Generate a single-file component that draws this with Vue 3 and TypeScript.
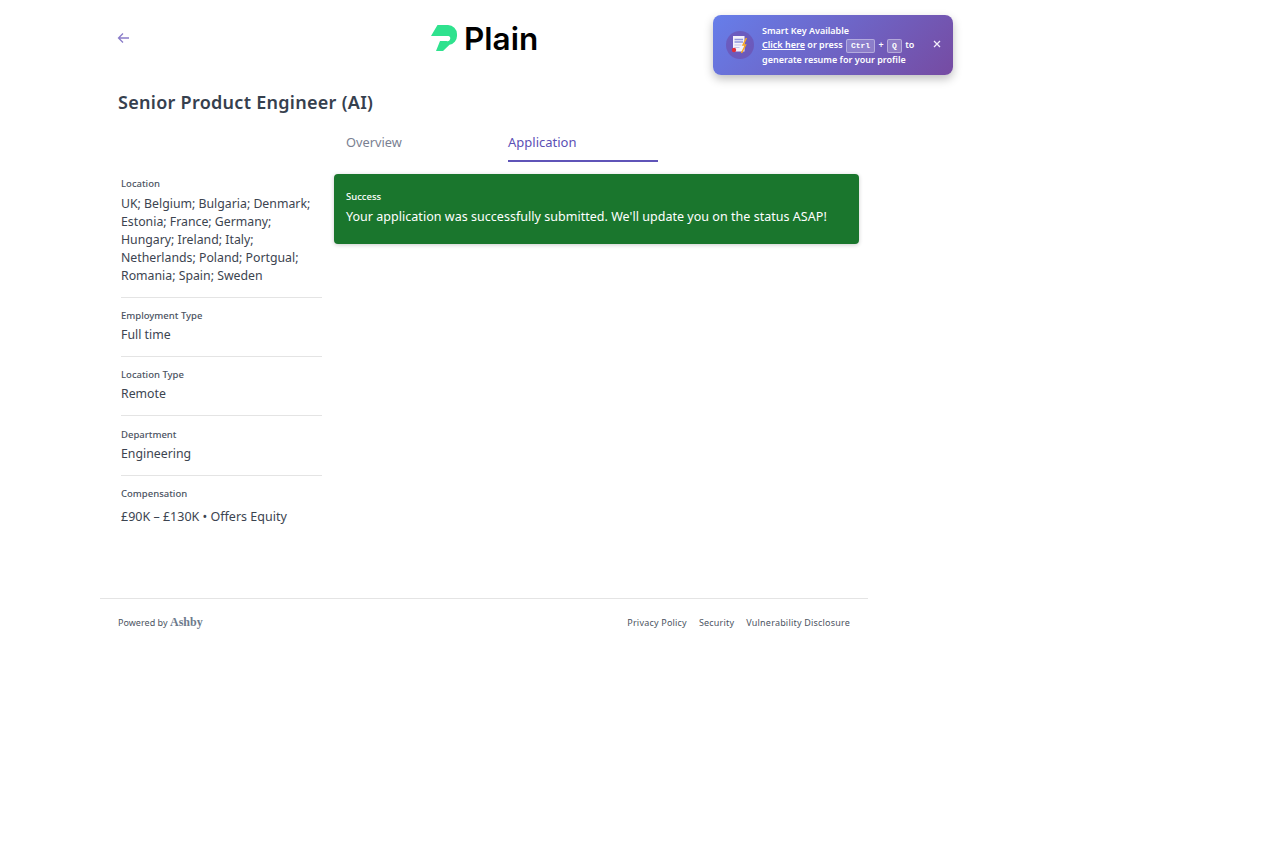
<script setup lang="ts">
const facts = [
  { label: 'Location', value: 'UK; Belgium; Bulgaria; Denmark; Estonia; France; Germany; Hungary; Ireland; Italy; Netherlands; Poland; Portgual; Romania; Spain; Sweden' },
  { label: 'Employment Type', value: 'Full time' },
  { label: 'Location Type', value: 'Remote' },
  { label: 'Department', value: 'Engineering' },
  { label: 'Compensation', value: '£90K – £130K • Offers Equity' },
]
const links = ['Privacy Policy', 'Security', 'Vulnerability Disclosure']
</script>

<template>
  <div class="page">
    <div class="shell">
      <header class="top">
        <svg class="back" width="14" height="12" viewBox="0 0 14 12" fill="none" stroke="#8a7cc9" stroke-width="1.3">
          <path d="M12 6H1.500M6 1.500 1.500 6 6 10.500" />
        </svg>
        <div class="logo">
          <svg width="26" height="26" viewBox="0 0 26 26">
            <path fill="#2fe28e" d="M6.500 0H17a9 9 0 0 1 9 9v2a9 9 0 0 1-7.500 8.800L12 26H5l4-10h6.500a2.500 2.500 0 0 0 2-5H0z" />
          </svg>
          <span class="logo-text">Plain</span>
        </div>
      </header>
      <h1 class="title">Senior Product Engineer (AI)</h1>
      <div class="columns">
        <aside class="side">
          <div v-for="f in facts" :key="f.label" class="fact">
            <div class="fact-label">{{ f.label }}</div>
            <div class="fact-value">{{ f.value }}</div>
          </div>
        </aside>
        <main class="main">
          <nav class="tabs">
            <a class="tab">Overview</a>
            <a class="tab active">Application</a>
          </nav>
          <div class="alert">
            <div class="alert-title">Success</div>
            <div class="alert-body">Your application was successfully submitted. We'll update you on the status ASAP!</div>
          </div>
        </main>
      </div>
      <footer class="foot">
        <div class="powered">Powered by <span class="ashby">Ashby</span></div>
        <div class="links"><a v-for="l in links" :key="l">{{ l }}</a></div>
      </footer>
    </div>
    <div class="toast">
      <div class="toast-icon">
        <svg width="18" height="20" viewBox="0 0 18 20">
          <rect x="2" y="1" width="11.500" height="15.500" fill="#f4f2fb" />
          <path d="M3.500 4.500h8.500M3.500 7h8.500" stroke="#8f97dc" stroke-width="1.300" />
          <path d="M3.500 10h7M3.500 12.500h5" stroke="#c3c5ea" stroke-width="1" />
          <path d="M15.500 3 12 10h2.500L10.500 18" fill="none" stroke="#f5a623" stroke-width="1.500" />
          <circle cx="3" cy="15" r="2.200" fill="#e02f3a" />
        </svg>
      </div>
      <div class="toast-text">
        <div>Smart Key Available</div>
        <div><u>Click here</u> or press <kbd>Ctrl</kbd> + <kbd>Q</kbd> to</div>
        <div>generate resume for your profile</div>
      </div>
      <svg class="close" width="8" height="8" viewBox="0 0 8 8" stroke="#f3eefb" stroke-width="1.300"><path d="M1 1l6 6M7 1 1 7" /></svg>
    </div>
  </div>
</template>

<style>
body { background: #fff; }
</style>

<style scoped>
.page {
  position: relative;
  min-height: 864px;
  font-family: "Noto Sans", sans-serif;
  color: #36404e;
}
.shell { width: 768px; margin-left: 100px; }
.top {
  display: flex;
  align-items: center;
  height: 76px;
  padding-left: 17px;
}
.back { display: block; }
.logo {
  display: flex;
  align-items: center;
  gap: 7px;
  margin-left: 300px;
}
.logo-text {
  font-family: Inter, sans-serif;
  font-weight: 600;
  font-size: 31.500px;
  line-height: 36px;
  padding-top: 1px;
  color: #000;
}
.title {
  margin: 14px 0 0 18px;
  font-size: 18px;
  line-height: 24px;
  font-weight: 600;
  letter-spacing: .28px;
  color: #36404e;
}
.columns { display: flex; margin-top: 16px; padding-left: 21px; }
.side { width: 201px; padding-top: 48px; }
.fact { padding: 0 0 12px; border-bottom: 1px solid #e4e4e4; margin-bottom: 12.500px; }
.fact:first-child { margin-bottom: 11.500px; }
.fact:last-child { border-bottom: 0; margin-bottom: 0; }
.fact-label { font-size: 9.500px; line-height: 12px; color: #4a5261; font-weight: 500; }
.fact-value { font-size: 12.300px; line-height: 18px; margin-top: 4px; color: #3c4450; }
.fact:first-child .fact-value { margin-top: 5px; }
.fact:last-child .fact-value { margin-top: 8px; font-size: 12.500px; }
.main { width: 525px; margin-left: 12px; }
.tabs { display: flex; height: 32px; padding-left: 12px; gap: 12px; }
.tab {
  width: 150px;
  box-sizing: border-box;
  height: 32px;
  font-size: 12.800px;
  line-height: 18px;
  padding-top: 3px;
  color: #7a7f92;
}
.tab.active {
  color: #5b50b5;
  border-bottom: 2px solid #5f54b8;
  font-size: 13px;
}
.alert {
  margin-top: 12px;
  height: 70px;
  box-sizing: border-box;
  padding: 16px 12px;
  border-radius: 4px;
  background: #1a762d;
  color: #fff;
  box-shadow: 0 1px 4px rgba(0, 0, 0, .2);
}
.alert-title { font-size: 9.500px; line-height: 13px; font-weight: 500; }
.alert-body { font-size: 12.500px; line-height: 18px; margin-top: 5px; letter-spacing: .03px; }
.foot {
  margin-top: 60px;
  border-top: 1px solid #e4e4e4;
  height: 47px;
  padding: 0 18px;
  display: flex;
  align-items: center;
  justify-content: space-between;
  color: #4c5462;
  font-size: 9px;
}
.powered { line-height: 12px; letter-spacing: .03px; }
.ashby {
  font-family: "Liberation Serif", serif;
  font-weight: 700;
  font-size: 12px;
  color: #6d7a8c;
}
.links { display: flex; gap: 12px; font-size: 9px; letter-spacing: .2px; }
.toast {
  position: absolute;
  left: 713px;
  top: 15px;
  width: 240px;
  height: 60px;
  box-sizing: border-box;
  padding: 0 12px 0 13px;
  display: flex;
  align-items: center;
  border-radius: 8px;
  color: #fff;
  background: linear-gradient(135deg, #667eea, #764ba2);
  box-shadow: 0 4px 10px rgba(0, 0, 0, .25);
}
.toast-icon {
  width: 28px;
  height: 28px;
  border-radius: 50%;
  background: rgba(110, 60, 150, .45);
  display: flex;
  align-items: center;
  justify-content: center;
  flex: none;
}
.toast-text {
  margin-left: 8px;
  font-size: 9px;
  line-height: 14px;
  font-weight: 600;
  white-space: nowrap;
}
kbd {
  display: inline-block;
  font-family: "Liberation Mono", monospace;
  font-size: 8px;
  font-weight: 700;
  line-height: 12px;
  padding: 0 4px;
  margin: 0 1px;
  border: 1px solid rgba(255, 255, 255, .35);
  border-radius: 2px;
  background: rgba(255, 255, 255, .2);
}
.close { margin-left: auto; margin-top: -2px; flex: none; }
</style>
